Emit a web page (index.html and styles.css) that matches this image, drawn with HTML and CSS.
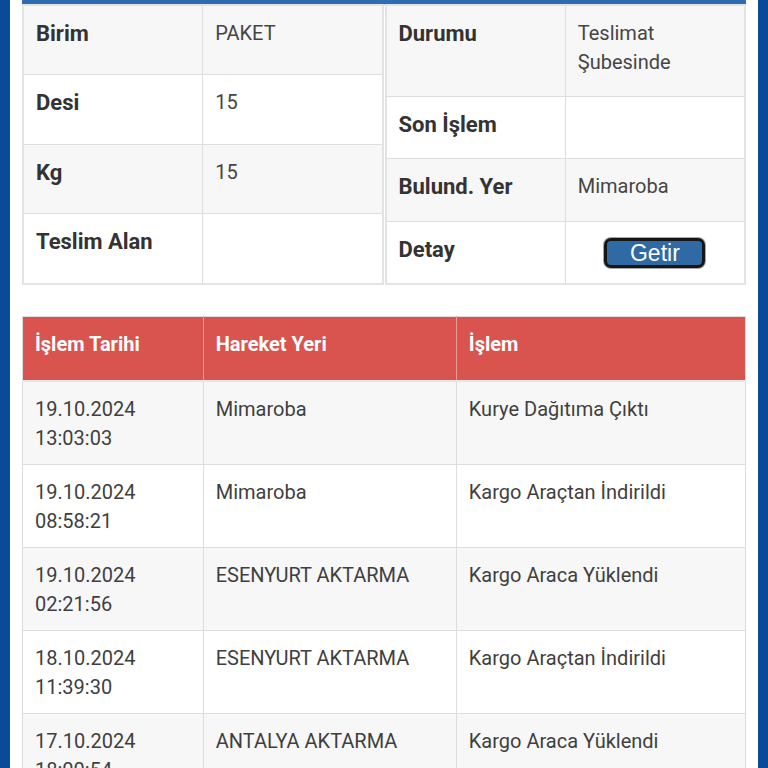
FILE: index.html
```html
<!DOCTYPE html>
<html lang="tr">
<head>
<meta charset="utf-8">
<link rel="stylesheet" href="styles.css">
</head>
<body>
<div class="frame">
  <div class="page">
    <div class="topbar"></div>
    <div class="info">
      <div class="info-col">
        <table class="kv">
          <tr><th>Birim</th><td>PAKET</td></tr>
          <tr><th>Desi</th><td>15</td></tr>
          <tr><th>Kg</th><td>15</td></tr>
          <tr><th>Teslim Alan</th><td></td></tr>
        </table>
      </div>
      <div class="info-col">
        <table class="kv">
          <tr><th>Durumu</th><td>Teslimat Şubesinde</td></tr>
          <tr><th>Son İşlem</th><td></td></tr>
          <tr><th>Bulund. Yer</th><td>Mimaroba</td></tr>
          <tr><th>Detay</th><td class="btn-cell"><button class="getir" type="button">Getir</button></td></tr>
        </table>
      </div>
    </div>
    <table class="history">
      <thead>
        <tr><th class="c1">İşlem Tarihi</th><th class="c2">Hareket Yeri</th><th class="c3">İşlem</th></tr>
      </thead>
      <tbody>
        <tr><td>19.10.2024<br>13:03:03</td><td>Mimaroba</td><td>Kurye Dağıtıma Çıktı</td></tr>
        <tr><td>19.10.2024<br>08:58:21</td><td>Mimaroba</td><td>Kargo Araçtan İndirildi</td></tr>
        <tr><td>19.10.2024<br>02:21:56</td><td>ESENYURT AKTARMA</td><td>Kargo Araca Yüklendi</td></tr>
        <tr><td>18.10.2024<br>11:39:30</td><td>ESENYURT AKTARMA</td><td>Kargo Araçtan İndirildi</td></tr>
        <tr><td>17.10.2024<br>18:00:54</td><td>ANTALYA AKTARMA</td><td>Kargo Araca Yüklendi</td></tr>
      </tbody>
    </table>
  </div>
</div>
</body>
</html>
```

FILE: styles.css
```css
html, body {
  margin: 0;
  padding: 0;
  background: #0a4a97;
  font-family: Roboto, "Noto Sans", Arial, sans-serif;
}
.frame {
  padding: 0 10px;
  background: #0a4a97;
  height: 768px;
  overflow: hidden;
}
.page {
  background: #ffffff;
  padding: 0 12px;
  height: 768px;
}
.topbar {
  height: 4px;
  background: #2f6db3;
  box-shadow: 0 1px 0 #9dbde0;
}
.info {
  display: grid;
  grid-template-columns: 1fr 1fr;
  column-gap: 1px;
  align-items: stretch;
}
.info-col {
  display: flex;
}
.kv {
  width: 100%;
  border-collapse: collapse;
  border: 2px solid #e3e3e3;
  table-layout: fixed;
}
.kv tr:nth-child(odd) {
  background: #f7f7f7;
}
.kv tr:nth-child(even) {
  background: #ffffff;
}
.kv th, .kv td {
  border: 1px solid #dedede;
  vertical-align: top;
  text-align: left;
  padding: 13px 12px 19.2px;
  line-height: 29px;
  width: 50%;
}
.kv th {
  font-size: 22px;
  font-weight: 700;
  color: #333333;
}
.kv td {
  font-size: 20px;
  color: #454545;
}
.kv td.btn-cell {
  vertical-align: middle;
  padding-top: 0;
  padding-bottom: 0;
}
.getir {
  display: block;
  margin: 1px auto 0;
  font-family: "Liberation Sans", Arial, sans-serif;
  font-size: 23px;
  line-height: 22px;
  color: #ffffff;
  background: #2f6aa5;
  border: 3px solid #161616;
  border-radius: 7px;
  box-shadow: 0 0 0 1px #a8a8a8;
  width: 101px;
  height: 30px;
  padding: 0;
}
.history {
  width: 100%;
  margin-top: 31px;
  border-collapse: collapse;
  table-layout: fixed;
  border: 1px solid #e0e0e0;
}
.history th, .history td {
  box-sizing: border-box;
}
.history .c1 { width: 25%; }
.history .c2 { width: 35%; }
.history .c3 { width: 40%; }
.history thead tr {
  background: #d9534f;
}
.history th {
  color: #ffffff;
  font-size: 20px;
  font-weight: 700;
  text-align: left;
  line-height: 29px;
  padding: 13px 12px 21px;
  border: 1px solid #ea9a97;
  border-top: none;
  border-bottom: 2px solid #e6e6e6;
}
.history th:first-child { border-left: none; }
.history th:last-child { border-right: none; }
.history td {
  font-size: 20px;
  color: #3f3f3f;
  line-height: 29px;
  vertical-align: top;
  padding: 13px 12px 11px;
  border: 1px solid #dedede;
}
.history tbody tr:nth-child(odd) {
  background: #f7f7f7;
}
.history tbody tr:nth-child(even) {
  background: #ffffff;
}
```
